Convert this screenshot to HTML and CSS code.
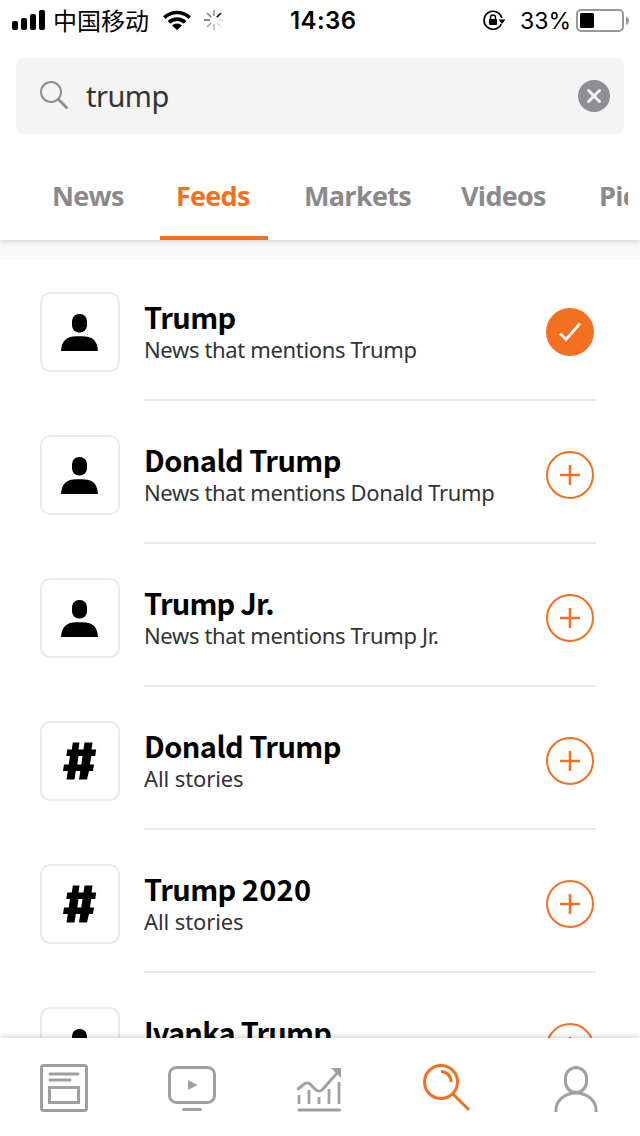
FILE: index.html
```html
<!DOCTYPE html>
<html lang="en">
<head>
<meta charset="utf-8">
<meta name="viewport" content="width=device-width">
<title>Search feeds</title>
<link rel="stylesheet" href="styles.css">
</head>
<body>
<svg class="symbols" aria-hidden="true">
  <symbol id="person" viewBox="0 0 40 40"><rect x="12" y="2" width="15" height="18.600" rx="7.100"/><path d="M1 39C1.500 28.600 7 24.200 16 24.200h6c10 0 15.500 4 15.900 14.800z"/></symbol>
  <symbol id="hash" viewBox="0 0 40 40"><path d="M12.800 1.500h6.700l-1 7h5l1-7h8l-1 7h4.700l-1 6.500h-4l-1.200 8.500h4l-1 6.500h-4L27 38.500h-8l1.300-8.500h-4.500l-1.300 8.500h-8L7.800 30H3l1-6.500h4.700L10 15H6.300l1-6.500h4.500zM18.500 15l-1.200 8.500h4l1.200-8.500z" fill-rule="evenodd"/></symbol>
  <symbol id="plus" viewBox="0 0 48 48"><circle cx="24" cy="24" r="23" fill="none" stroke="#f37021" stroke-width="2"/><path d="M24 14v20M14 24h20" stroke="#f37021" stroke-width="2.600"/></symbol>
  <symbol id="check" viewBox="0 0 48 48"><circle cx="24" cy="24" r="24" fill="#f37021"/><path d="M14 25.500l6 6 14-16" fill="none" stroke="#fff" stroke-width="2.700"/></symbol>
</svg>
<div class="screen">
  <header class="header">
    <div class="status">
      <svg class="signal" viewBox="0 0 34 20"><rect y="11" width="6" height="9" rx="2"/><rect x="9" y="8" width="6" height="12" rx="2"/><rect x="18" y="4" width="6" height="16" rx="2"/><rect x="27" width="6" height="20" rx="2"/></svg>
      <span class="carrier">中国移动</span>
      <svg class="wifi" viewBox="0 0 28 20"><g fill="none" stroke="#000" stroke-width="3.600"><path d="M1.300 7.600a18.200 18.200 0 0 1 25.400 0"/><path d="M6 12.400a11.500 11.500 0 0 1 16 0"/></g><path d="M9 15.500a7.200 7.200 0 0 1 10 0L14 20z"/></svg>
      <svg class="spinner" viewBox="0 0 20 20" stroke-width="1.700"><path d="M10 0v6" stroke="#999"/><path d="M17 3l-4.200 4.200" stroke="#111"/><path d="M14 10h6" stroke="#e5e5e5"/><path d="M12.800 12.800L17 17" stroke="#ddd"/><path d="M10 14v6" stroke="#bbb"/><path d="M7.200 12.800L3 17" stroke="#aaa"/><path d="M0 10h6" stroke="#777"/><path d="M3 3l4.200 4.200" stroke="#888"/></svg>
      <span class="clock">14:36</span>
      <svg class="lock" viewBox="0 0 23 20"><path d="M18.200 14.200A9 9 0 1 1 18.800 8" fill="none" stroke="#000" stroke-width="1.700"/><path d="M15.500 9.500h7L19 14z"/><rect x="6" y="9" width="8" height="6" rx="1"/><path d="M7.500 10V7.500a2.500 2.500 0 0 1 5 0V10" fill="none" stroke="#000" stroke-width="1.400"/></svg>
      <span class="percent">33%</span>
      <svg class="battery" viewBox="0 0 54 24"><rect x="1" y="1" width="46" height="21" rx="4" fill="none" stroke="#999" stroke-width="2"/><rect x="4" y="4" width="14" height="15" rx="1.500"/><path d="M50 7.500c4 1.500 4 7 0 8.500z" fill="#999"/></svg>
    </div>
    <div class="search">
      <svg class="lens" viewBox="0 0 30 30" fill="none" stroke="#8e8e92"><circle cx="11" cy="11" r="10" stroke-width="2"/><path d="M18.300 18.300L26.500 26.500" stroke-width="2.800" stroke-linecap="round"/></svg>
      <span class="query">trump</span>
      <svg class="clear" viewBox="0 0 32 32"><circle cx="16" cy="16" r="16" fill="#8e8e93"/><path d="M10.500 10.500l11 11m0-11l-11 11" stroke="#f4f4f4" stroke-width="3" stroke-linecap="round"/></svg>
    </div>
    <nav class="tabs">
      <span class="tab news">News</span><span class="tab active">Feeds</span><span class="tab markets">Markets</span><span class="tab videos">Videos</span><span class="tab">Pictures</span>
    </nav>
  </header>
  <main class="list">
    <div class="row"><span class="tile"><svg><use href="#person"/></svg></span><div class="body"><div class="text"><h2>Trump</h2><p>News that mentions Trump</p></div><svg class="action"><use href="#check"/></svg></div></div>
    <div class="row"><span class="tile"><svg><use href="#person"/></svg></span><div class="body"><div class="text"><h2>Donald Trump</h2><p>News that mentions Donald Trump</p></div><svg class="action"><use href="#plus"/></svg></div></div>
    <div class="row"><span class="tile"><svg><use href="#person"/></svg></span><div class="body"><div class="text"><h2 class="tight">Trump Jr.</h2><p>News that mentions Trump Jr.</p></div><svg class="action"><use href="#plus"/></svg></div></div>
    <div class="row"><span class="tile"><svg><use href="#hash"/></svg></span><div class="body"><div class="text"><h2>Donald Trump</h2><p class="loose">All stories</p></div><svg class="action"><use href="#plus"/></svg></div></div>
    <div class="row"><span class="tile"><svg><use href="#hash"/></svg></span><div class="body"><div class="text"><h2>Trump <span class="year">2020</span></h2><p class="loose">All stories</p></div><svg class="action"><use href="#plus"/></svg></div></div>
    <div class="row"><span class="tile"><svg><use href="#person"/></svg></span><div class="body"><div class="text"><h2 class="tight">Ivanka Trump</h2></div><svg class="action"><use href="#plus"/></svg></div></div>
  </main>
  <nav class="bottom">
    <svg viewBox="0 0 48 48"><rect x="1.500" y="1.500" width="45" height="45" rx="2"/><path d="M10 10h28M10 16h20" stroke-linecap="round"/><rect x="9.500" y="23.500" width="29" height="15"/></svg>
    <svg viewBox="0 0 48 48"><rect x="1.500" y="3.500" width="45" height="35" rx="7"/><path d="M15.500 45.500h17" stroke-linecap="round"/><path d="M20 16v10l9.500-5z" class="solid"/></svg>
    <svg viewBox="0 0 48 48"><path d="M1.500 25.500l6-5c3-2.500 5-2.500 8 1l4 4c2 2 5 2 7 0L42 8"/><path d="M35 4h10v10z" class="solid"/><path d="M3 31v9M13 26v14M23 33v7M33 25v15M43 18v22" stroke-width="2.800"/><path d="M3 46h40.500" stroke-linecap="round"/></svg>
    <svg viewBox="0 0 48 48" class="selected"><circle cx="17" cy="18" r="16.500"/><path d="M29 30l16 16M17 7.500a10 10 0 0 1 10 10.500"/></svg>
    <svg viewBox="0 0 48 48"><rect x="13.500" y="3.500" width="21" height="25" rx="10.500"/><path d="M4 48v-2a20 17 0 0 1 40 0v2"/></svg>
  </nav>
</div>
</body>
</html>
```

FILE: styles.css
```css
* { box-sizing: border-box; }
body { margin: 0; background: #fff; font-family: "Noto Sans", sans-serif; color: #000; }
svg { display: block; flex: none; }
h2, p { margin: 0; white-space: nowrap; }
.symbols { display: none; }
.screen { width: 640px; height: 1136px; display: flex; flex-direction: column; overflow: hidden; }
.header { height: 240px; flex: none; background: #fff; box-shadow: 0 1px 6px rgba(0,0,0,.2); z-index: 1; }
.status { height: 58px; display: flex; align-items: flex-start; padding: 9px 0 0 12px; line-height: 24px; }
.signal { width: 34px; height: 20px; margin-top: 1px; }
.carrier { width: 96px; margin-left: 7px; font: 24px/22px "Noto Sans CJK SC", sans-serif; }
.wifi { width: 28px; height: 20px; margin: 1px 0 0 14px; }
.spinner { width: 20px; height: 20px; margin: 1px 0 0 13px; }
.clock { width: 67px; margin-left: 66px; font: 600 24px/24px Inter, sans-serif; letter-spacing: .4px; white-space: nowrap; }
.lock { width: 23px; height: 20px; margin: 1px 0 0 126px; }
.percent { width: 51px; margin-left: 14px; font: 23px/24px Inter, sans-serif; }
.battery { width: 54px; height: 24px; margin-left: 5px; }
.search { height: 76px; margin: 0 16px; padding: 0 14px 0 24px; display: flex; align-items: center; background: #f4f4f4; border-radius: 8px; }
.lens { width: 30px; height: 30px; }
.clear { width: 32px; height: 32px; }
.query { flex: 1; margin-left: 16px; font-size: 29px; line-height: 40px; letter-spacing: -.5px; color: #333; }
.tabs { height: 106px; margin-right: 12px; padding-left: 36px; display: flex; align-items: flex-end; overflow: hidden; }
.tab { flex: none; height: 72px; padding: 8px 0 0 16px; margin-right: 16px; font: 700 27px/40px "Open Sans", sans-serif; letter-spacing: -.7px; color: #8a8a8d; }
.tab.active { width: 108px; color: #f37021; border-bottom: 4px solid #f37021; margin-right: 20px; }
.news { width: 108px; }
.markets { width: 141px; }
.videos { width: 122px; }
.list { flex: 1; min-height: 0; overflow: hidden; border-top: 20px solid #fafafa; }
.row { height: 143px; padding: 34px 44px 0 40px; display: flex; }
.row:first-child { height: 141px; padding-top: 32px; }
.tile { width: 80px; height: 80px; border: 2px solid #ebebeb; border-radius: 10px; display: grid; place-items: center; }
.tile svg { width: 40px; height: 40px; }
.body { height: 109px; flex: 1; margin-left: 24px; border-bottom: 2px solid #e9e9e9; display: flex; justify-content: space-between; }
.text { padding-top: 3px; }
h2 { font: 600 29px/43px "Noto Sans CJK SC", sans-serif; letter-spacing: -.55px; }
.tight { letter-spacing: -.8px; }
.year { letter-spacing: .3px; }
p { font-size: 22px; line-height: 22px; letter-spacing: -.35px; color: #333; }
.loose { letter-spacing: -.1px; }
.action { width: 48px; height: 48px; margin: 16px 2px 0 0; }
.bottom { height: 98px; flex: none; padding: 26px 40px 0; display: flex; justify-content: space-between; background: #fff; box-shadow: 0 -1px 6px rgba(0,0,0,.2); z-index: 1; }
.bottom svg { width: 48px; height: 48px; overflow: visible; fill: none; stroke: #a0a0a0; stroke-width: 3; }
.bottom .solid { fill: #a0a0a0; stroke: none; }
.bottom .selected { stroke: #f37021; }
```
